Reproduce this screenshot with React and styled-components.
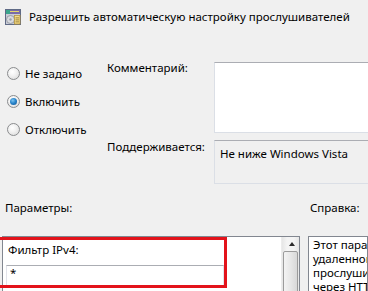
import React from "react";
import styled, { createGlobalStyle } from "styled-components";

const Global = createGlobalStyle`
  html, body { margin: 0; padding: 0; background: #f0f0f0; }
  body { font-family: "Noto Sans", "Open Sans", sans-serif; font-size: 11.5px; color: #000; }
`;

const Page = styled.div`
  position: relative;
  width: 368px;
  height: 291px;
  overflow: hidden;
  background: #f0f0f0;
`;

const Header = styled.div`
  display: flex;
  align-items: center;
  gap: 8px;
  padding: 9px 0 0 5px;
  height: 16px;
  white-space: nowrap;
`;

const Title = styled.span`
  line-height: 16px;
`;

const Top = styled.div`
  display: flex;
  margin-top: 37px;
`;

const RadioGroup = styled.div`
  flex: none;
  width: 107px;
  display: flex;
  flex-direction: column;
  gap: 15px;
  padding: 5px 0 0 7px;
  box-sizing: border-box;
`;

const RadioRow = styled.label`
  display: flex;
  align-items: center;
  gap: 5px;
  height: 13px;
  white-space: nowrap;
`;

const RadioCircle = styled.span`
  width: 13px;
  height: 13px;
  box-sizing: border-box;
  border-radius: 50%;
  border: 1px solid #8a8c8e;
  background: radial-gradient(circle at 40% 35%, #ffffff 0%, #f2f2f2 40%, #d6d6d6 100%);
  display: flex;
  align-items: center;
  justify-content: center;
  flex: none;
  &::after {
    content: "";
    display: ${(p) => (p.$checked ? "block" : "none")};
    width: 7px;
    height: 7px;
    border-radius: 50%;
    background: radial-gradient(circle at 40% 35%, #7cc4f0 0%, #2a86cc 45%, #0b4f8f 100%);
  }
`;

const Fields = styled.div`
  flex: none;
  display: grid;
  grid-template-columns: 107px 170px;
  grid-template-rows: 71px 44px;
  row-gap: 7px;
`;

const FieldLabel = styled.div`
  line-height: 14px;
  white-space: nowrap;
  margin-top: ${(p) => p.$offset || 0}px;
`;

const Box = styled.div`
  box-sizing: border-box;
  border: 1px solid #dbdfe6;
  border-top-color: #abadb3;
  background: ${(p) => (p.$readonly ? "#f0f0f0" : "#fff")};
  padding: 5px 5px;
  line-height: 15px;
  white-space: nowrap;
`;

const LabelsRow = styled.div`
  display: grid;
  grid-template-columns: 298px 1fr;
  column-gap: 8px;
  padding-left: 2px;
  margin-top: 17px;
  line-height: 14px;
`;

const SectionLabel = styled.div`
  padding-left: ${(p) => p.$pad}px;
  white-space: nowrap;
`;

const Panels = styled.div`
  display: grid;
  grid-template-columns: 298px 1fr;
  column-gap: 8px;
  padding-left: 2px;
  margin-top: 21px;
  height: 70px;
`;

const ParamsPanel = styled.div`
  box-sizing: border-box;
  border: 1px solid #828790;
  background: #fff;
  display: flex;
  height: 70px;
`;

const ParamsContent = styled.div`
  flex: 1;
  padding: 6px 0 0 3px;
`;

const ParamName = styled.div`
  line-height: 14px;
  padding-left: 2px;
`;

const Input = styled.div`
  margin-top: 8px;
  width: 218px;
  height: 22px;
  box-sizing: border-box;
  border: 1px solid #e2e3ea;
  border-top-color: #abadb3;
  padding: 0 0 0 3px;
  line-height: 14px;
`;

const Scrollbar = styled.div`
  width: 17px;
  background: linear-gradient(to right, #e6e6e6, #f4f4f4 30%, #f4f4f4 70%, #e6e6e6);
  border-left: 1px solid #ececec;
  display: flex;
  flex-direction: column;
  align-items: center;
`;

const ArrowBtn = styled.div`
  height: 16px;
  width: 100%;
  display: flex;
  align-items: center;
  justify-content: center;
  &::after {
    content: "";
    border-left: 3.5px solid transparent;
    border-right: 3.5px solid transparent;
    border-bottom: 4px solid #2b2b2b;
    margin-left: 2px;
  }
`;

const Thumb = styled.div`
  width: 15px;
  height: 60px;
  box-sizing: border-box;
  border: 1px solid #9b9b9b;
  border-radius: 2px;
  background: linear-gradient(to right, #f3f3f3, #e7e7e7 50%, #d8d8d8);
  margin-left: -1px;
`;

const HelpPanel = styled.div`
  box-sizing: border-box;
  border: 1px solid #828790;
  background: #fff;
  padding: 1px 0 0 4px;
  height: 70px;
  overflow: hidden;
  line-height: 14px;
  white-space: nowrap;
`;

const Highlight = styled.div`
  position: absolute;
  left: -5px;
  top: 237px;
  width: 232px;
  height: 51px;
  box-sizing: border-box;
  border: 3px solid #e3131b;
  pointer-events: none;
`;

function PolicyIcon() {
  return (
    <svg width="16" height="16" viewBox="0 0 16 16">
      <rect x="0.5" y="0.5" width="15" height="15" fill="#c9ccd6" stroke="#5f6a86" />
      <rect x="1" y="1" width="14" height="4" fill="#7a6aa8" />
      <rect x="1" y="1" width="4" height="4" fill="#3aa58c" />
      <rect x="5" y="2" width="9" height="1" fill="#e4d86a" />
      <circle cx="5.5" cy="10.5" r="4" fill="#d8dadf" stroke="#8b8f99" strokeWidth="0.8" />
      <circle cx="5.5" cy="10.5" r="1.2" fill="#9aa0aa" />
      <rect x="9.5" y="6.5" width="5.5" height="8.5" fill="#f3dc8a" stroke="#b8963c" strokeWidth="0.8" />
      <rect x="10.5" y="8.5" width="3.5" height="0.8" fill="#8a6e2a" />
      <rect x="10.5" y="10.5" width="3.5" height="0.8" fill="#8a6e2a" />
      <rect x="10.5" y="12.5" width="3.5" height="0.8" fill="#8a6e2a" />
    </svg>
  );
}

const options = [
  { label: "Не задано", checked: false },
  { label: "Включить", checked: true },
  { label: "Отключить", checked: false },
];

const helpLines = [
  "Этот параметр политики позволяет",
  "удаленного управления Windows",
  "прослушивать сеть по протоколу",
  "через HTTP и HTTPS.",
];

export default function App() {
  return (
    <Page>
      <Global />
      <Header>
        <PolicyIcon />
        <Title>Разрешить автоматическую настройку прослушивателей</Title>
      </Header>
      <Top>
        <RadioGroup>
          {options.map((o) => (
            <RadioRow key={o.label}>
              <RadioCircle $checked={o.checked} />
              {o.label}
            </RadioRow>
          ))}
        </RadioGroup>
        <Fields>
          <FieldLabel $offset={-1}>Комментарий:</FieldLabel>
          <Box />
          <FieldLabel>Поддерживается:</FieldLabel>
          <Box $readonly>Не ниже Windows Vista</Box>
        </Fields>
      </Top>
      <LabelsRow>
        <SectionLabel $pad={3}>Параметры:</SectionLabel>
        <SectionLabel $pad={2}>Справка:</SectionLabel>
      </LabelsRow>
      <Panels>
        <ParamsPanel>
          <ParamsContent>
            <ParamName>Фильтр IPv4:</ParamName>
            <Input>*</Input>
          </ParamsContent>
          <Scrollbar>
            <ArrowBtn />
            <Thumb />
          </Scrollbar>
        </ParamsPanel>
        <HelpPanel>
          {helpLines.map((l) => (
            <div key={l}>{l}</div>
          ))}
        </HelpPanel>
      </Panels>
      <Highlight />
    </Page>
  );
}
